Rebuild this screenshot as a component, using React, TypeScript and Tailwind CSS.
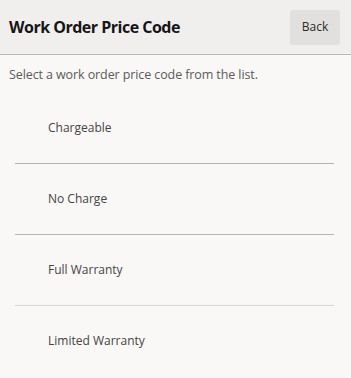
const CODES = ['Chargeable', 'No Charge', 'Full Warranty', 'Limited Warranty'];

export default function App() {
  return (
    <div
      className="w-[351px] h-[378px] overflow-hidden bg-[#f9f8f7] text-[#333]"
      style={{ fontFamily: '"Open Sans", "Noto Sans", sans-serif' }}
    >
      {/* Header */}
      <div className="h-[55px] flex items-center justify-between pl-[9px] pr-[11px] bg-[#f0efee] border-b border-[#b8b8b8]">
        <h1 className="text-[16px] font-bold text-[#161616] tracking-[-0.5px]">Work Order Price Code</h1>
        <button className="w-[50px] h-[35px] rounded-[3px] bg-[#e1e0de] text-[12px] text-[#2b2b2b]">
          Back
        </button>
      </div>

      <p className="px-[9px] pt-[11px] text-[12.5px] text-[#5a5a5a] tracking-[-0.1px]">
        Select a work order price code from the list.
      </p>

      {/* List */}
      <ul className="mx-[15px] mt-[8px] w-[319px]">
        {CODES.map((c, i) => (
          <li
            key={c}
            className={
              'h-[71px] flex items-center pl-[33px] text-[12px] text-[#444] ' +
              (i === 2 ? 'border-b border-[#d4d4d4]' : i < CODES.length - 1 ? 'border-b border-[#b3b3b3]' : '')
            }
          >
            {c}
          </li>
        ))}
      </ul>
    </div>
  );
}
